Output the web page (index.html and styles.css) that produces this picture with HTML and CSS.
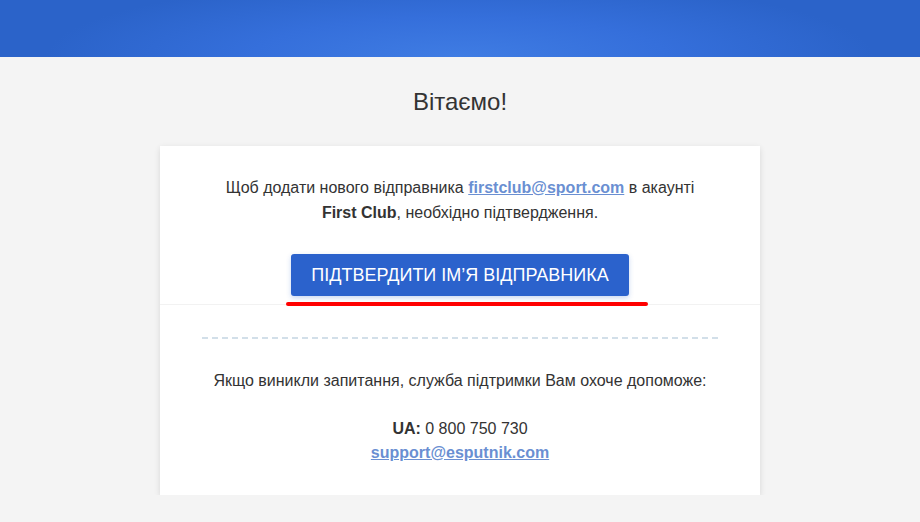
FILE: index.html
```html
<!DOCTYPE html>
<html lang="uk">
<head>
  <meta charset="UTF-8" />
  <meta name="viewport" content="width=device-width, initial-scale=1.0" />
  <title>Вітаємо!</title>
  <link rel="stylesheet" href="styles.css">
</head>
<body>
  <div class="header"></div>

  <h1>Вітаємо!</h1>

  <div class="card">
    <div class="top">
      <p class="intro">
        Щоб додати нового відправника <a href="#">firstclub@sport.com</a> в акаунті<br>
        <strong>First Club</strong>, необхідно підтвердження.
      </p>
      <div class="btn-wrap">
        <a class="btn" href="#">Підтвердити ім’я відправника</a>
        <span class="mark"></span>
      </div>
    </div>

    <div class="bottom">
      <div class="dashed"></div>
      <p class="help">Якщо виникли запитання, служба підтримки Вам охоче допоможе:</p>
      <p class="contacts">
        <strong>UA:</strong> 0 800 750 730<br>
        <a href="#">support@esputnik.com</a>
      </p>
    </div>
  </div>
</body>
</html>
```

FILE: styles.css
```css
body {
  font-family: "Liberation Sans", Arial, sans-serif;
  background: #f4f4f4;
  margin: 0;
  color: #333;
}
.header {
  height: 57px;
  background: radial-gradient(ellipse 45% 140% at 50% 100%, #3f7ce3 0%, #356fdb 50%, #2b63c9 100%);
}
h1 {
  text-align: center;
  font-weight: 400;
  font-size: 24px;
  margin: 32px 0 0;
  height: 57px;
  line-height: 26px;
  color: #333;
}
.card {
  width: 600px;
  margin: 0 auto;
  background: #fff;
  box-shadow: 0 2px 6px rgba(0, 0, 0, 0.12);
  text-align: center;
}
.top {
  padding-top: 29px;
  height: 129px;
  border-bottom: 1px solid #f2f2f2;
}
.intro {
  margin: 0;
  font-size: 16px;
  line-height: 25px;
}
.intro a, .contacts a {
  color: #6a8fd2;
  font-weight: 700;
}
.btn-wrap {
  position: relative;
  margin-top: 29px;
  display: inline-block;
}
.btn {
  display: inline-block;
  width: 338px;
  height: 42px;
  line-height: 42px;
  background: #2b62cc;
  color: #fff;
  text-decoration: none;
  text-transform: uppercase;
  font-size: 18px;
  border-radius: 3px;
  box-shadow: 0 2px 5px rgba(43, 98, 204, 0.25);
}
.mark {
  position: absolute;
  left: -5px;
  right: -19px;
  top: 48px;
  height: 4px;
  background: #f00;
  border-radius: 2px;
}
.bottom {
  padding: 32px 40px 30px;
}
.dashed {
  height: 2px;
  margin-left: 2px;
  margin-right: -2px;
  background: repeating-linear-gradient(90deg, #d2dfe9 0 6px, transparent 6px 10px);
}
.help {
  margin: 29px 0 0;
  font-size: 16px;
  line-height: 25px;
}
.contacts {
  margin: 24px 0 0;
  font-size: 16px;
  line-height: 24px;
}
```
